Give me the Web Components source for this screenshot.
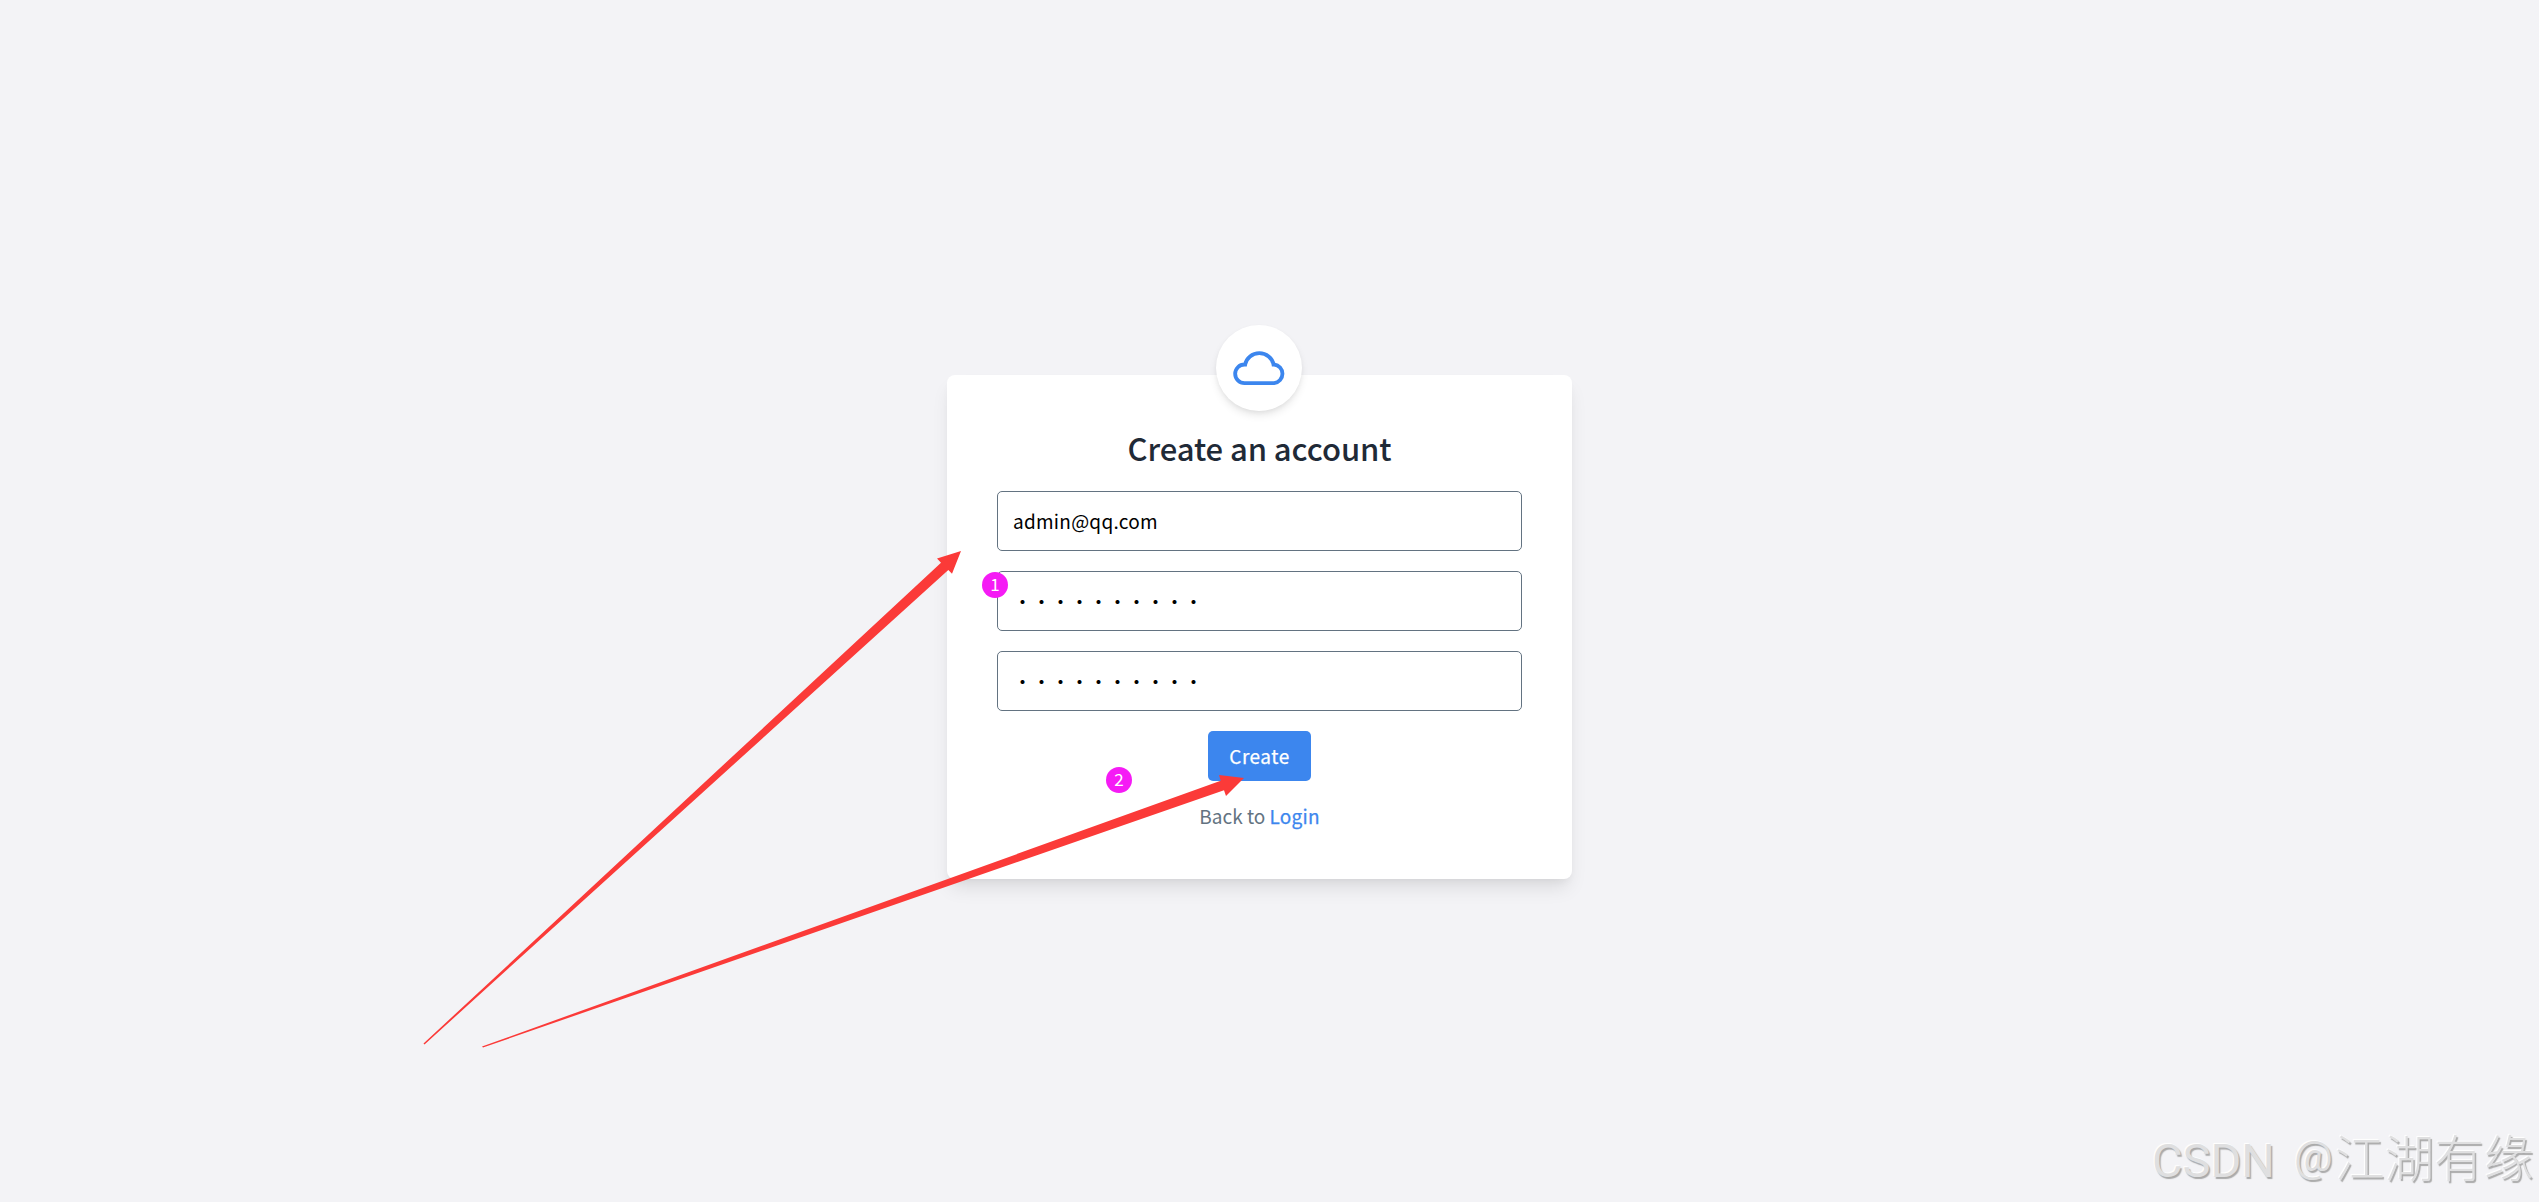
<!DOCTYPE html>
<html lang="en"><head><meta charset="utf-8"><title>Create an account</title>
<style>
html,body{margin:0;height:100%;overflow:hidden;background:#f3f3f6}
body{font-family:"Noto Sans CJK SC","Noto Sans",sans-serif}
</style></head><body>
<signup-page></signup-page>
<script>
class Base extends HTMLElement{
  connectedCallback(){ if(!this.shadowRoot) this.attachShadow({mode:'open'}).innerHTML=this.view(); }
}
customElements.define('cloud-logo',class extends Base{view(){return `
<style>:host{display:flex;align-items:center;justify-content:center;width:86px;height:86px;border-radius:50%;background:#fff;box-shadow:0 5px 8px -1px rgba(0,0,0,.1),0 2px 5px -1px rgba(0,0,0,.06)}svg{display:block}</style>
<svg width="60" height="60" viewBox="146 86 180 180" fill="none" stroke="#3c86ee" stroke-width="11.5"><path d="M192.5 221.5H281.500A28.200 28.200 0 0 0 281.500 165.500H279.500A43 40 0 0 0 194.500 165.500H192.500A28 28 0 0 0 192.500 221.500Z"/></svg>`}});
customElements.define('text-field',class extends Base{view(){return `
<style>:host{display:flex;align-items:center;box-sizing:border-box;height:60px;padding:0 15px;border:1px solid #637381;border-radius:5px;background:#fff;color:#000;font-size:19px;line-height:30px;letter-spacing:.25px}
:host([secret]){letter-spacing:0;padding-top:2px}</style><slot></slot>`}});
customElements.define('primary-button',class extends Base{view(){return `
<style>:host{display:flex;align-items:center;justify-content:center;box-sizing:border-box;width:103px;height:50px;border-radius:5px;background:#3c86ee;color:#fff;font-size:19px;font-weight:400;letter-spacing:.5px;-webkit-text-stroke:.25px #fff;line-height:30px}</style><slot></slot>`}});
customElements.define('step-badge',class extends Base{view(){return `
<style>:host{position:absolute;display:flex;justify-content:center;width:26px;height:26px;border-radius:50%;background:#f51bf5;color:#fff;font:17px/23px "Noto Sans CJK SC",sans-serif}</style><slot></slot>`}});
customElements.define('pointer-arrows',class extends Base{view(){return `
<style>:host{position:absolute;inset:0}svg{display:block}</style>
<svg width="2539" height="1202" fill="#fb3a38"><path d="M423.500 1043.500L941 562.700L937 558.500L961 551L952 573.700L948.300 570L424.500 1044.500Z"/><path d="M482 1046.500L1220.700 780.700L1219 775L1244 778L1226 796L1224 790.300L483 1047.500Z"/></svg>`}});
customElements.define('site-watermark',class extends Base{view(){return `
<style>:host{position:absolute;left:2152px;top:1120px;display:flex;align-items:baseline;white-space:nowrap;color:#dfdfe0;font:400 47px/70px Roboto,sans-serif;text-shadow:1.500px 1.500px 1px #aaa,-1px -1px 1px #fff}
::slotted(.latin){width:142px}
::slotted(.at){width:41px;font-size:43px;line-height:70px;margin-bottom:7px;transform:translateY(-6px)}
::slotted(.han){font-family:"Noto Sans CJK SC",sans-serif;font-weight:300;font-size:49.700px}</style><slot></slot>`}});
customElements.define('signup-card',class extends Base{view(){return `
<style>:host{display:flex;flex-direction:column;align-items:stretch;box-sizing:border-box;width:625px;height:504px;padding:0 50px;border-radius:8px;background:#fff;box-shadow:0 12px 19px -4px rgba(0,0,0,.1),0 5px 8px -3px rgba(0,0,0,.05)}
cloud-logo{align-self:center;margin:-50px 1px 0 0}
h1{margin:14px 0 21px;height:45px;text-align:center;font-size:31px;line-height:45px;letter-spacing:-.08px;font-weight:500;color:#1f2a37;white-space:nowrap}
form{display:flex;flex-direction:column;gap:20px;margin:0}
primary-button{align-self:center}
p{margin:20px 0 0;text-align:center;font-size:19px;line-height:30px;color:#637381}a{color:#3c86ee;letter-spacing:.2px;-webkit-text-stroke:.25px #3c86ee}</style>
<cloud-logo></cloud-logo><h1>Create an account</h1>
<form><text-field>admin@qq.com</text-field><text-field secret>••••••••••</text-field><text-field secret>••••••••••</text-field><primary-button>Create</primary-button></form>
<p>Back to <a>Login</a></p>`}});
customElements.define('signup-page',class extends Base{view(){return `
<style>:host{display:flex;justify-content:center;align-items:flex-start;box-sizing:border-box;position:relative;height:1202px;padding:375px 20px 0 0;overflow:hidden}
.one{left:982px;top:572px}.two{left:1106px;top:767px}</style>
<signup-card></signup-card><pointer-arrows></pointer-arrows><step-badge class="one">1</step-badge><step-badge class="two">2</step-badge><site-watermark><span class="latin">CSDN </span><span class="at">@</span><span class="han">江湖有缘</span></site-watermark>`}});
</script></body></html>
